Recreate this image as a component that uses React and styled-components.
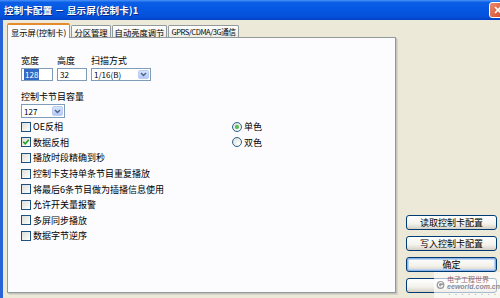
import React from 'react'
import styled, { createGlobalStyle } from 'styled-components'

const Global = createGlobalStyle`
  html, body { margin: 0; padding: 0; background: #ece9d8; }
  body { font-family: "Noto Sans CJK SC", "Liberation Sans", sans-serif; font-size: 9px; color: #000; }
`

const Window = styled.div`
  width: 500px;
  height: 298px;
  display: flex;
  flex-direction: column;
  overflow: hidden;
  position: relative;
  background: #ece9d8;
`

const TitleBar = styled.div`
  height: 20px;
  flex: none;
  display: flex;
  align-items: center;
  padding-left: 4px;
  background: linear-gradient(#4a92f7 0%, #0b5fe6 12%, #0557e2 45%, #0452db 80%, #0343c7 100%);
`

const Title = styled.div`
  flex: 1;
  color: #fff;
  font-weight: bold;
  font-size: 9.5px;
  letter-spacing: 0.2px;
  text-shadow: 1px 1px 0 #0a2a8a;
  white-space: nowrap;
`

const CloseBtn = styled.div`
  width: 15px;
  height: 14px;
  margin-right: -6px;
  border: 1px solid #fff;
  border-radius: 3px;
  background: linear-gradient(135deg, #e98a6b, #d5482a);
  display: flex;
  align-items: center;
  justify-content: center;
`

const Body = styled.div`
  flex: 1;
  display: flex;
  border-left: 3px solid #2a63d6;
  padding: 4px 3px 5px 4px;
`

const LeftCol = styled.div`
  width: 389px;
  display: flex;
  flex-direction: column;
`

const Tabs = styled.div`
  display: flex;
  align-items: flex-end;
  height: 13px;
  gap: 1px;
`

const Tab = styled.div`
  height: ${p => (p.$active ? '13px' : '11px')};
  padding: 0 ${p => p.$pad || 2}px;
  display: flex;
  align-items: center;
  background: ${p => (p.$active ? '#fcfcfe' : 'linear-gradient(#fff, #ecebe5)')};
  border: 1px solid #919b9c;
  border-bottom: none;
  border-top: ${p => (p.$active ? '2px solid #e68b2c' : '1px solid #919b9c')};
  border-radius: 2px 2px 0 0;
  white-space: nowrap;
  font-size: ${p => p.$fs || 8.3}px;
  letter-spacing: ${p => p.$ls || 0}px;
  position: relative;
  z-index: ${p => (p.$active ? 1 : 0)};
  margin-bottom: ${p => (p.$active ? '-1px' : '0')};
`

const Panel = styled.div`
  flex: 1;
  background: #fcfcfe;
  border: 1px solid #919b9c;
  box-shadow: 1px 1px 0 #c4c3bc, 2px 2px 0 #d8d6cc;
  padding: 17px 14px 0 13px;
  display: flex;
`

const Fields = styled.div`
  width: 211px;
  display: flex;
  flex-direction: column;
`

const FieldRow = styled.div`
  display: flex;
  gap: 4px;
`

const Field = styled.div`
  display: flex;
  flex-direction: column;
  gap: 1px;
  margin-top: ${p => p.$top || 0}px;
`

const Label = styled.div`
  font-size: 9px;
  line-height: 12px;
  white-space: nowrap;
`

const TextBox = styled.div`
  width: ${p => p.$w}px;
  height: 13px;
  box-sizing: border-box;
  border: 1px solid #7f9db9;
  background: #fff;
  display: flex;
  align-items: center;
  padding-left: 2px;
  font-size: 8px;
`

const Selected = styled.span`
  background: #316ac5;
  color: #fff;
  padding: 0 1px;
`

const SelectBox = styled(TextBox)`
  height: ${p => p.$h || 13}px;
  justify-content: space-between;
  padding-right: 1px;
`

const DropBtn = styled.div`
  width: 11px;
  height: calc(100% - 2px);
  border-radius: 2px;
  background: linear-gradient(#d6e3fd, #b4c8f6);
  border: 1px solid #b9cdf5;
  box-sizing: border-box;
  display: flex;
  align-items: center;
  justify-content: center;
`

const Checks = styled.div`
  display: flex;
  flex-direction: column;
  gap: 4px;
  margin-top: 3px;
`

const CheckRow = styled.div`
  display: flex;
  align-items: center;
  height: 11.6px;
  white-space: nowrap;
`

const Box = styled.div`
  width: 10px;
  height: 10px;
  box-sizing: border-box;
  border: 1px solid #1c5180;
  background: linear-gradient(135deg, #dcdcd7, #fff);
  margin-right: 2px;
  display: flex;
  align-items: center;
  justify-content: center;
`

const Radios = styled.div`
  margin-top: 66px;
  display: flex;
  flex-direction: column;
  gap: 4px;
`

const Circle = styled(Box)`
  border-radius: 50%;
  border-color: #2c628b;
  background: radial-gradient(circle at 70% 70%, #fff, #d8d8d2);
`

const Dot = styled.div`
  width: 4px;
  height: 4px;
  border-radius: 50%;
  background: radial-gradient(#6ed06e, #1c9a1c);
`

const RightCol = styled.div`
  flex: 1;
  display: flex;
  flex-direction: column;
  justify-content: flex-end;
  align-items: flex-end;
  gap: 6px;
`

const Button = styled.div`
  width: 91px;
  height: 15px;
  box-sizing: border-box;
  border: 1px solid #003c74;
  border-radius: 3px;
  background: linear-gradient(#fff 0%, #f3f2ec 60%, #d6d0c5 100%);
  box-shadow: ${p => (p.$default ? 'inset 0 0 0 1px #8db2e3, inset 0 0 0 2px #bcd4f6' : 'none')};
  display: flex;
  align-items: center;
  justify-content: center;
  font-size: 9px;
`

const Watermark = styled.div`
  position: absolute;
  right: 0;
  bottom: 0;
  width: 66px;
  height: 26px;
  background: rgba(255, 255, 255, 0.65);
  display: flex;
  align-items: center;
  gap: 2px;
  padding-left: 2px;
  box-sizing: border-box;
`

const WmText = styled.div`
  display: flex;
  flex-direction: column;
  line-height: 8px;
`

const WmCn = styled.div`
  font-size: 7px;
  color: #9b6a6a;
  white-space: nowrap;
`

const WmEn = styled.div`
  font-size: 7px;
  font-style: italic;
  font-weight: bold;
  color: #8a8a96;
  font-family: "Liberation Sans", sans-serif;
`

const WmDots = styled.div`
  font-size: 5px;
  color: #aaa;
  letter-spacing: 1.5px;
  line-height: 5px;
`

const Chevron = () => (
  <svg width="7" height="5" viewBox="0 0 7 5">
    <path d="M1 1 L3.5 3.5 L6 1" stroke="#4d6185" strokeWidth="1.4" fill="none" />
  </svg>
)

const Tick = () => (
  <svg width="8" height="8" viewBox="0 0 8 8">
    <path d="M1.2 3.8 L3.2 5.8 L6.8 1.8" stroke="#21a121" strokeWidth="1.6" fill="none" />
  </svg>
)

const checks = [
  ['OE反相', false],
  ['数据反相', true],
  ['播放时段精确到秒', false],
  ['控制卡支持单条节目重复播放', false],
  ['将最后6条节目做为插播信息使用', false],
  ['允许开关量报警', false],
  ['多屏同步播放', false],
  ['数据字节逆序', false],
]

export default function App() {
  return (
    <Window>
      <Global />
      <TitleBar>
        <Title>控制卡配置 － 显示屏(控制卡)1</Title>
        <CloseBtn>
          <svg width="8" height="8" viewBox="0 0 8 8">
            <path d="M1 1 L7 7 M7 1 L1 7" stroke="#fff" strokeWidth="1.6" />
          </svg>
        </CloseBtn>
      </TitleBar>
      <Body>
        <LeftCol>
          <Tabs>
            <Tab $active $pad={3}>显示屏(控制卡)</Tab>
            <Tab>分区管理</Tab>
            <Tab>自动亮度调节</Tab>
            <Tab $fs={7.5} $ls={-0.4}>GPRS/CDMA/3G通信</Tab>
          </Tabs>
          <Panel>
            <Fields>
              <FieldRow>
                <Field>
                  <Label>宽度</Label>
                  <TextBox $w={32}><Selected>128</Selected></TextBox>
                </Field>
                <Field>
                  <Label>高度</Label>
                  <TextBox $w={30}>32</TextBox>
                </Field>
                <Field>
                  <Label>扫描方式</Label>
                  <SelectBox $w={60}>1/16(B)<DropBtn><Chevron /></DropBtn></SelectBox>
                </Field>
              </FieldRow>
              <Field $top={10}>
                <Label>控制卡节目容量</Label>
                <SelectBox $w={44} $h={14}>127<DropBtn><Chevron /></DropBtn></SelectBox>
              </Field>
              <Checks>
                {checks.map(([t, on]) => (
                  <CheckRow key={t}>
                    <Box>{on && <Tick />}</Box>
                    {t}
                  </CheckRow>
                ))}
              </Checks>
            </Fields>
            <Radios>
              <CheckRow>
                <Circle><Dot /></Circle>单色
              </CheckRow>
              <CheckRow>
                <Circle />双色
              </CheckRow>
            </Radios>
          </Panel>
        </LeftCol>
        <RightCol>
          <Button>读取控制卡配置</Button>
          <Button>写入控制卡配置</Button>
          <Button $default>确定</Button>
          <Button />
        </RightCol>
      </Body>
      <Watermark>
        <svg width="14" height="14" viewBox="0 0 14 14">
          <circle cx="7" cy="7" r="6" fill="#9a9a9a" />
          <path d="M10 4.5 A3.5 3.5 0 1 0 10.5 8 L7.5 8" stroke="#fff" strokeWidth="1.6" fill="none" />
        </svg>
        <WmText>
          <WmCn>电子工程世界</WmCn>
          <WmEn>eeworld.com.cn</WmEn>
          <WmDots>••••••••</WmDots>
        </WmText>
      </Watermark>
    </Window>
  )
}
